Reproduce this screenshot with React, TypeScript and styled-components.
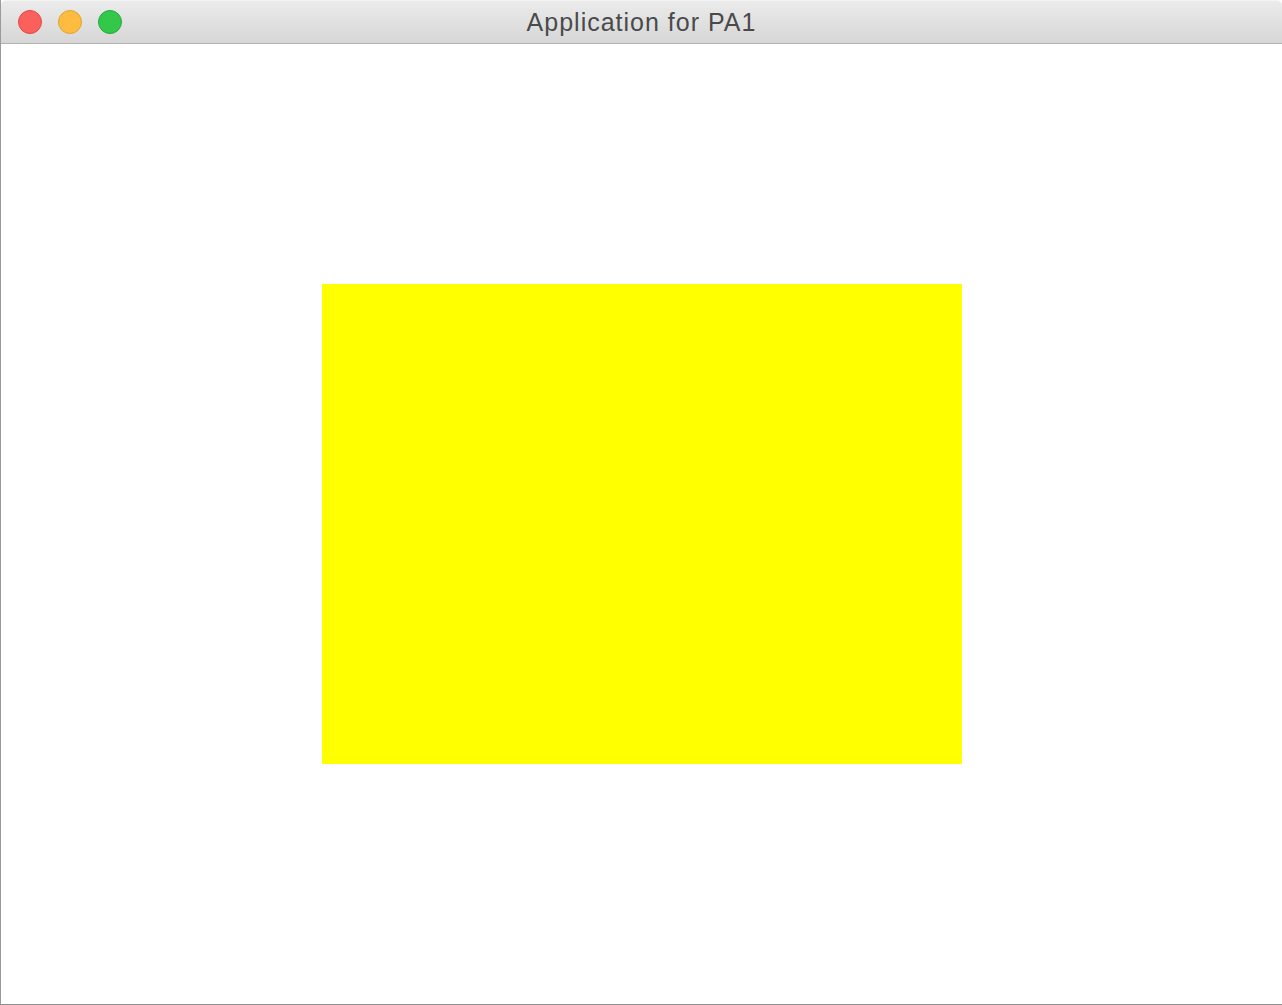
import React from "react";
import styled, { createGlobalStyle } from "styled-components";

const Global = createGlobalStyle`
  html, body { margin: 0; padding: 0; background: #ffffff; }
  body { width: 1282px; height: 1005px; overflow: hidden; }
`;

const Window = styled.div`
  width: 1282px;
  height: 1005px;
  box-sizing: border-box;
  display: flex;
  flex-direction: column;
  border-left: 1px solid #9a9a9a;
  border-bottom: 1px solid #8e8e8e;
  background: #ffffff;
`;

const TitleBar = styled.div`
  position: relative;
  height: 44px;
  flex: none;
  box-sizing: border-box;
  display: flex;
  align-items: center;
  justify-content: center;
  background: linear-gradient(to bottom, #ebebeb 0%, #d6d6d6 100%);
  border-top: 1px solid #f4f4f4;
  border-bottom: 1px solid #b2b2b2;
  border-top-left-radius: 5px;
  border-top-right-radius: 5px;
`;

const Lights = styled.div`
  position: absolute;
  left: 17px;
  top: 9px;
  display: flex;
  gap: 16px;
`;

const Light = styled.span<{ $fill: string; $edge: string }>`
  width: 24px;
  height: 24px;
  box-sizing: border-box;
  border-radius: 50%;
  background: ${(p) => p.$fill};
  border: 1px solid ${(p) => p.$edge};
`;

const Title = styled.div`
  font-family: "Liberation Sans", Arial, sans-serif;
  font-size: 25px;
  color: #4a4a4a;
  letter-spacing: 1px;
  margin-top: 1px;
`;

const Content = styled.div`
  flex: 1;
  display: flex;
  align-items: center;
  justify-content: center;
`;

const Canvas = styled.div`
  width: 640px;
  height: 480px;
  background: #ffff00;
`;

export default function App() {
  return (
    <>
      <Global />
      <Window>
        <TitleBar>
          <Lights>
            <Light $fill="#fc605c" $edge="#de4a44" />
            <Light $fill="#fdbc40" $edge="#dea236" />
            <Light $fill="#34c84a" $edge="#27a83a" />
          </Lights>
          <Title>Application for PA1</Title>
        </TitleBar>
        <Content>
          <Canvas />
        </Content>
      </Window>
    </>
  );
}
